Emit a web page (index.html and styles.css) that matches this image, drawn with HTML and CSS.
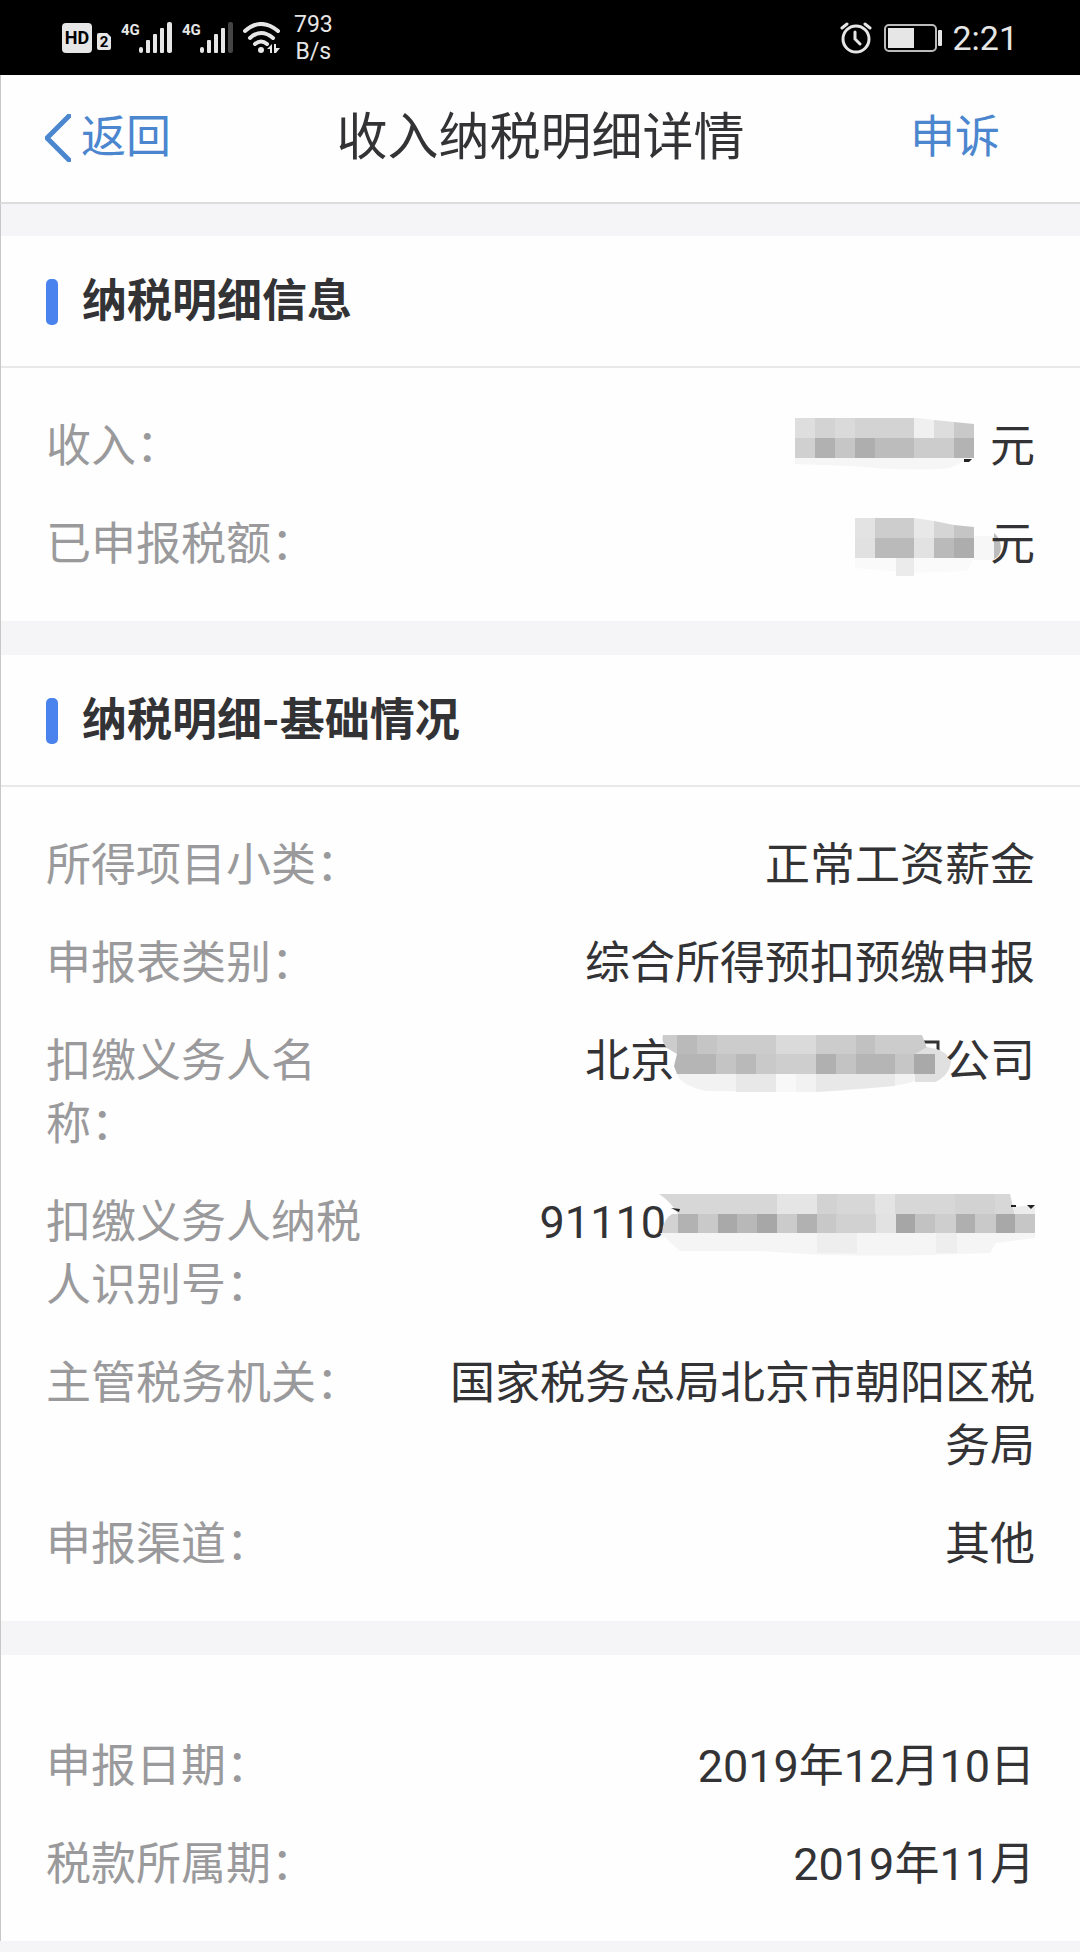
FILE: index.html
```html
<!DOCTYPE html>
<html lang="zh-CN">
<head>
<meta charset="UTF-8">
<meta name="viewport" content="width=device-width, initial-scale=1.0">
<title>收入纳税明细详情</title>
<link rel="stylesheet" href="styles.css">
</head>
<body>
<div class="status-bar">
  <div class="status-left">
    <svg class="icon-hd" width="50" height="32" viewBox="0 0 50 32">
      <rect x="0" y="1" width="30" height="30" rx="4" fill="#e6e6e6"/>
      <text x="15" y="22" text-anchor="middle" font-size="18" font-weight="700" fill="#000">HD</text>
      <path d="M37 11h8l4 4v11a2 2 0 0 1-2 2H37a2 2 0 0 1-2-2V13a2 2 0 0 1 2-2z" fill="#e6e6e6"/>
      <text x="42" y="25" text-anchor="middle" font-size="15" font-weight="700" fill="#000">2</text>
    </svg>
    <svg class="icon-signal" width="52" height="32" viewBox="0 0 52 32">
      <text x="0" y="13" font-size="15" font-weight="700" fill="#e6e6e6">4G</text>
      <g fill="#e6e6e6">
        <rect x="18" y="25" width="4" height="6" rx="2"/>
        <rect x="25" y="18" width="4" height="13" rx="1"/>
        <rect x="32" y="12" width="4" height="19" rx="1"/>
        <rect x="39" y="6" width="4" height="25" rx="1"/>
        <rect x="46" y="0" width="5" height="31" rx="2"/>
      </g>
    </svg>
    <svg class="icon-signal" width="52" height="32" viewBox="0 0 52 32">
      <text x="0" y="13" font-size="15" font-weight="700" fill="#e6e6e6">4G</text>
      <g fill="#e6e6e6">
        <rect x="18" y="25" width="4" height="6" rx="2"/>
        <rect x="25" y="18" width="4" height="13" rx="1"/>
        <rect x="32" y="12" width="4" height="19" rx="1"/>
        <rect x="39" y="6" width="4" height="25" rx="1"/>
        <rect x="46" y="0" width="5" height="31" rx="2" fill="#444"/>
      </g>
    </svg>
    <svg class="icon-wifi" width="38" height="32" viewBox="0 0 38 32">
      <g fill="none" stroke="#e6e6e6" stroke-width="4" stroke-linecap="round">
        <path d="M2 9Q18 -5 35 9"/>
        <path d="M7 16Q18 6 30 16"/>
        <path d="M12 22Q18 17 24 22"/>
      </g>
      <circle cx="18" cy="28" r="3" fill="#e6e6e6"/>
      <path d="M29 22v9h-2v-4h-3zM31 22h2v4h4l-4 5h-2z" fill="#e6e6e6"/>
    </svg>
    <div class="net-speed">793<br>B/s</div>
  </div>
  <div class="status-right">
    <svg class="icon-alarm" width="32" height="32" viewBox="0 0 32 32">
      <g fill="none" stroke="#e6e6e6" stroke-width="3" stroke-linecap="round">
        <circle cx="16" cy="17" r="13"/>
        <path d="M2 6l5-4M30 6l-5-4M15 10v7l5 5"/>
      </g>
    </svg>
    <svg class="icon-battery" width="60" height="32" viewBox="0 0 60 32">
      <rect x="1" y="3" width="51" height="26" rx="4" fill="none" stroke="#bbb" stroke-width="2"/>
      <rect x="4" y="6" width="26" height="20" fill="#e6e6e6"/>
      <rect x="54" y="8" width="4" height="16" rx="1" fill="#e6e6e6"/>
    </svg>
    <span class="clock">2:21</span>
  </div>
</div>

<header class="nav-bar">
  <a href="#" class="nav-back">
    <svg width="26" height="48" viewBox="0 0 26 48">
      <path d="M24 2L2 24l22 22" fill="none" stroke="#4b86cf" stroke-width="5" stroke-linecap="round"/>
    </svg>
    <span>返回</span>
  </a>
  <h1 class="nav-title">收入纳税明细详情</h1>
  <a href="#" class="nav-appeal">申诉</a>
</header>

<main class="page">
  <section class="card">
    <h2 class="card-title">纳税明细信息</h2>
    <dl class="info-list">
      <div class="info-row">
        <dt>收入：</dt>
        <dd>
          <svg class="mosaic" width="200" height="63" viewBox="0 0 200 63">
            <path d="M5 41H184L160 53Q120 57 60 51L5 49z" fill="#f6f6f6"/>
            <path d="M5 3H125V23H5z" fill="#d3d3d3"/>
            <path d="M5 3H25V23H5z" fill="#dedede"/>
            <path d="M45 3H65V23H45z" fill="#dadada"/>
            <path d="M124 3H128L144 5V23H124z" fill="#f0f0f0"/>
            <path d="M144 5L164 7V23H144z" fill="#dddddd"/>
            <path d="M164 7L184 9V23H164z" fill="#c9c9c9"/>
            <rect x="5" y="23" width="20" height="20" fill="#d0d0d0"/>
            <rect x="25" y="23" width="20" height="20" fill="#b1b1b1"/>
            <rect x="45" y="23" width="20" height="20" fill="#c6c6c6"/>
            <rect x="65" y="23" width="20" height="20" fill="#aeaeae"/>
            <rect x="85" y="23" width="39" height="20" fill="#bcbcbc"/>
            <rect x="124" y="23" width="40" height="20" fill="#cccccc"/>
            <rect x="164" y="23" width="20" height="20" fill="#b3b3b3"/>
            <path d="M174 44h8l-3 3h-5z" fill="#222"/>
          </svg>元
        </dd>
      </div>
      <div class="info-row">
        <dt>已申报税额：</dt>
        <dd>
          <svg class="mosaic" width="200" height="63" viewBox="0 0 200 63">
            <path d="M65 43H184L178 58L124 60L65 55z" fill="#fafafa"/>
            <path d="M184 23H206V47H184z" fill="#f7f7f7"/>
            <path d="M204 20C213 27 213 43 204 46z" fill="#bdbdbd"/>
            <rect x="65" y="5" width="20" height="20" fill="#e3e3e3"/>
            <rect x="85" y="5" width="39" height="20" fill="#cdcdcd"/>
            <path d="M124 5L144 8V25H124z" fill="#e8e8e8"/>
            <path d="M144 8L164 12V25H144z" fill="#d5d5d5"/>
            <path d="M164 12L184 14V25H164z" fill="#c5c5c5"/>
            <rect x="65" y="25" width="20" height="20" fill="#e1e1e1"/>
            <rect x="85" y="25" width="39" height="20" fill="#bababa"/>
            <rect x="124" y="25" width="20" height="20" fill="#e2e2e2"/>
            <rect x="144" y="25" width="20" height="20" fill="#bababa"/>
            <rect x="164" y="25" width="20" height="20" fill="#adadad"/>
            <rect x="106" y="45" width="18" height="18" fill="#ebebeb"/>
          </svg>元
        </dd>
      </div>
    </dl>
  </section>

  <section class="card">
    <h2 class="card-title">纳税明细-基础情况</h2>
    <dl class="info-list">
      <div class="info-row">
        <dt>所得项目小类：</dt>
        <dd>正常工资薪金</dd>
      </div>
      <div class="info-row">
        <dt>申报表类别：</dt>
        <dd>综合所得预扣预缴申报</dd>
      </div>
      <div class="info-row">
        <dt>扣缴义务人名称：</dt>
        <dd>
          北京<svg class="mosaic" width="270" height="63" viewBox="0 0 270 63">
            <path d="M249 12h14v12" fill="none" stroke="#333" stroke-width="3"/>
            <path d="M2 44H262L230 54Q190 60 140 62L32 61Q6 56 2 44z" fill="#f2f2f2"/>
            <path d="M61 44H101V62H61zM141 44H220V56L141 62z" fill="#e8e8e8"/>
            <path d="M101 44H121V62H101z" fill="#f8f8f8"/>
            <path d="M-12 5H247L252 18L258 24H2L-8 18Q-14 12 -12 5z" fill="#cccccc"/>
            <rect x="2" y="5" width="20" height="19" fill="#bababa"/>
            <rect x="22" y="5" width="20" height="19" fill="#c5c5c5"/>
            <rect x="101" y="5" width="40" height="19" fill="#dadada"/>
            <rect x="181" y="5" width="19" height="19" fill="#c1c1c1"/>
            <path d="M252 17Q273 20 276 32Q274 46 260 52H240V24z" fill="#e0e0e0"/>
            <path d="M2 24H41V44H2L-1 36z" fill="#b5b5b5"/>
            <rect x="41" y="24" width="20" height="20" fill="#c4c4c4"/>
            <rect x="61" y="24" width="20" height="20" fill="#b9b9b9"/>
            <rect x="81" y="24" width="20" height="20" fill="#c9c9c9"/>
            <rect x="101" y="24" width="40" height="20" fill="#cecece"/>
            <rect x="141" y="24" width="20" height="20" fill="#b0b0b0"/>
            <rect x="161" y="24" width="20" height="20" fill="#c3c3c3"/>
            <rect x="181" y="24" width="39" height="20" fill="#b5b5b5"/>
            <rect x="220" y="24" width="19" height="20" fill="#c6c6c6"/>
            <rect x="239" y="24" width="21" height="20" fill="#a9a9a9"/>
          </svg>公司
        </dd>
      </div>
      <div class="info-row">
        <dt>扣缴义务人纳税人识别号：</dt>
        <dd>
          91110<svg class="mosaic" width="369" height="63" viewBox="2 0 369 63">
            <path d="M-4 42H371V47L332 52L326 62Q180 68 100 60L16 60z" fill="#f5f5f5"/>
            <path d="M153 42H193V62H153zM272 42H293V62H272z" fill="#eeeeee"/>
            <path d="M-5 3H346L350 20L371 14V23H14Q6 10 -5 3z" fill="#d7d7d7"/>
            <rect x="113" y="3" width="40" height="20" fill="#e5e5e5"/>
            <rect x="211" y="3" width="20" height="20" fill="#e4e4e4"/>
            <rect x="153" y="3" width="20" height="20" fill="#d2d2d2"/>
            <rect x="291" y="3" width="40" height="20" fill="#d2d2d2"/>
            <path d="M350 16L371 14V23H350z" fill="#ececec"/>
            <path d="M7 17l9 1-1 3-4-2zM347 14h5v2h-5zM363 14h8l-4 4z" fill="#222"/>
            <path d="M14 23V42H-2Q-1 28 8 23z" fill="#d2d2d2"/>
            <rect x="14" y="23" width="20" height="19" fill="#b2b2b2"/>
            <rect x="34" y="23" width="20" height="19" fill="#c9c9c9"/>
            <rect x="54" y="23" width="19" height="19" fill="#a9a9a9"/>
            <rect x="73" y="23" width="20" height="19" fill="#b8b8b8"/>
            <rect x="93" y="23" width="20" height="19" fill="#a7a7a7"/>
            <rect x="113" y="23" width="20" height="19" fill="#cbcbcb"/>
            <rect x="133" y="23" width="20" height="19" fill="#b1b1b1"/>
            <rect x="153" y="23" width="19" height="19" fill="#c8c8c8"/>
            <rect x="172" y="23" width="40" height="19" fill="#d1d1d1"/>
            <rect x="212" y="23" width="20" height="19" fill="#e2e2e2"/>
            <rect x="232" y="23" width="19" height="19" fill="#a6a6a6"/>
            <rect x="251" y="23" width="20" height="19" fill="#c2c2c2"/>
            <rect x="271" y="23" width="21" height="19" fill="#cecece"/>
            <rect x="292" y="23" width="19" height="19" fill="#afafaf"/>
            <rect x="311" y="23" width="21" height="19" fill="#c9c9c9"/>
            <rect x="332" y="23" width="19" height="19" fill="#a8a8a8"/>
            <rect x="351" y="23" width="20" height="19" fill="#c6c6c6"/>
          </svg>
        </dd>
      </div>
      <div class="info-row">
        <dt>主管税务机关：</dt>
        <dd>国家税务总局北京市朝阳区税务局</dd>
      </div>
      <div class="info-row">
        <dt>申报渠道：</dt>
        <dd>其他</dd>
      </div>
    </dl>
  </section>

  <section class="card card-dates">
    <dl class="info-list">
      <div class="info-row">
        <dt>申报日期：</dt>
        <dd>2019年12月10日</dd>
      </div>
      <div class="info-row">
        <dt>税款所属期：</dt>
        <dd>2019年11月</dd>
      </div>
    </dl>
  </section>
</main>
</body>
</html>
```
FILE: styles.css
```css
* {
  box-sizing: border-box;
}
body {
  margin: 0;
  min-height: 100vh;
  display: flex;
  flex-direction: column;
  font-family: Roboto, "Noto Sans CJK SC", sans-serif;
  font-size: 45px;
  line-height: 63px;
  color: #333336;
  background: #f5f5f7;
}
h1, h2, dl, dd {
  margin: 0;
}
a {
  color: #4b86cf;
  text-decoration: none;
}

/* status bar */
.status-bar {
  height: 75px;
  padding: 0 62px;
  display: flex;
  justify-content: space-between;
  align-items: center;
  background: #000;
  color: #e6e6e6;
}
.status-left, .status-right {
  display: flex;
  align-items: center;
}
.status-left {
  gap: 9px;
}
.status-right {
  gap: 12px;
}
.net-speed {
  margin-left: 4px;
  font-size: 23px;
  line-height: 27px;
  text-align: center;
}
.clock {
  font-size: 34px;
  line-height: 40px;
}
.icon-battery {
  margin-right: -4px;
}

/* nav bar */
.nav-bar {
  padding: 31px 44px 33px;
  display: grid;
  grid-template-columns: 1fr auto 1fr;
  align-items: center;
  background: #fefefe;
  border-bottom: 2px solid #dcdcdc;
  border-left: 1px solid #c8c8c8;
}
.nav-back {
  display: flex;
  align-items: center;
  gap: 10px;
}
.nav-title {
  font-size: 51px;
  font-weight: 400;
}
.nav-appeal {
  padding-right: 36px;
  text-align: right;
}

/* content */
.page {
  padding-top: 32px;
  display: flex;
  flex-direction: column;
  gap: 34px;
  border-left: 1px solid #c8c8c8;
}
.card {
  background: #fefefe;
}
.card-title {
  padding: 34px 45px 33px;
  display: flex;
  align-items: center;
  gap: 24px;
  font-size: 45px;
  font-weight: 700;
  border-bottom: 2px solid #e8e8ea;
}
.card-title::before {
  content: "";
  width: 12px;
  height: 46px;
  border-radius: 5px;
  background: #4a83ee;
}
.info-list {
  padding: 47px 45px 45px;
  display: flex;
  flex-direction: column;
  gap: 35px;
}
.card-dates .info-list {
  padding-top: 80px;
}
.info-row {
  display: flex;
  justify-content: space-between;
}
.info-row dt {
  width: 32%;
  color: #9a9a9c;
}
.info-row dd {
  width: 62%;
  text-align: right;
}
.mosaic {
  display: inline-block;
  vertical-align: top;
  overflow: visible;
}
```
